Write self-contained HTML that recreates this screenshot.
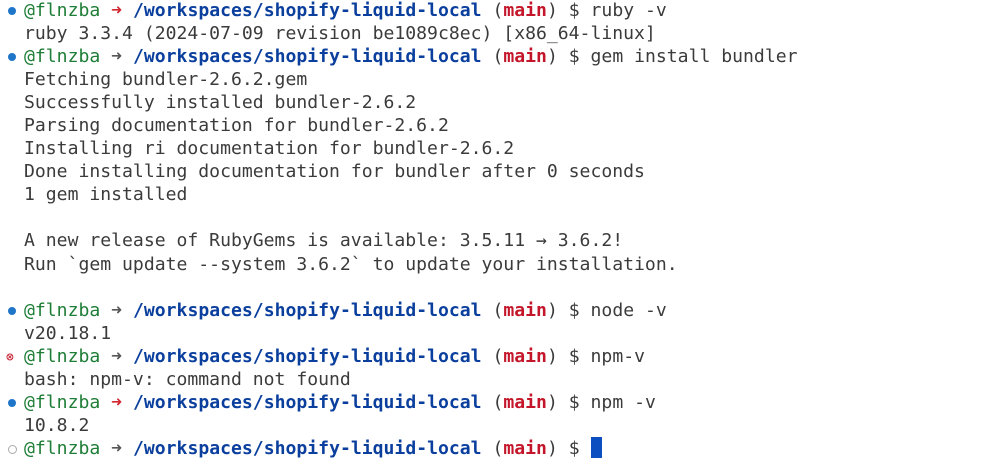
<!DOCTYPE html>
<html><head><meta charset="utf-8"><style>
body{margin:0;background:#fff;width:1002px;height:475px;overflow:hidden}
.t{position:absolute;left:0;top:-1px;font-family:"DejaVu Sans Mono","Liberation Mono",monospace;font-size:18.1px;line-height:23.05px;color:#3b3b3b}
.l{position:relative;padding-left:24px;height:23.05px;white-space:pre}
.g{color:#1e7d36}.b{color:#0b3f9e;font-weight:bold}.r{color:#c4162a;font-weight:bold}
.ar{color:#d0262e}.ag{color:#555}
.d{position:absolute;left:8px;top:8px;width:8px;height:8px;border-radius:50%;background:#1f75c8}
.o{position:absolute;left:8px;top:8px;width:7px;height:7px;border-radius:50%;border:1px solid #aaa}
.x{position:absolute;left:6px;top:1px;font-size:13px;color:#c4162a}
.cur{display:inline-block;width:11px;height:21px;background:#0b4fc0;vertical-align:-4px}
</style></head><body><div class="t"><div class="l"><span class="d"></span><span class="g">@flnzba</span> <span class="ar">➜</span> <span class="b">/workspaces/shopify-liquid-local</span> (<span class="r">main</span>) $ ruby -v</div><div class="l">ruby 3.3.4 (2024-07-09 revision be1089c8ec) [x86_64-linux]</div><div class="l"><span class="d"></span><span class="g">@flnzba</span> <span class="ag">➜</span> <span class="b">/workspaces/shopify-liquid-local</span> (<span class="r">main</span>) $ gem install bundler</div><div class="l">Fetching bundler-2.6.2.gem</div><div class="l">Successfully installed bundler-2.6.2</div><div class="l">Parsing documentation for bundler-2.6.2</div><div class="l">Installing ri documentation for bundler-2.6.2</div><div class="l">Done installing documentation for bundler after 0 seconds</div><div class="l">1 gem installed</div><div class="l"></div><div class="l">A new release of RubyGems is available: 3.5.11 → 3.6.2!</div><div class="l">Run `gem update --system 3.6.2` to update your installation.</div><div class="l"></div><div class="l"><span class="d"></span><span class="g">@flnzba</span> <span class="ag">➜</span> <span class="b">/workspaces/shopify-liquid-local</span> (<span class="r">main</span>) $ node -v</div><div class="l">v20.18.1</div><div class="l"><span class="x">⊗</span><span class="g">@flnzba</span> <span class="ag">➜</span> <span class="b">/workspaces/shopify-liquid-local</span> (<span class="r">main</span>) $ npm-v</div><div class="l">bash: npm-v: command not found</div><div class="l"><span class="d"></span><span class="g">@flnzba</span> <span class="ar">➜</span> <span class="b">/workspaces/shopify-liquid-local</span> (<span class="r">main</span>) $ npm -v</div><div class="l">10.8.2</div><div class="l"><span class="o"></span><span class="g">@flnzba</span> <span class="ag">➜</span> <span class="b">/workspaces/shopify-liquid-local</span> (<span class="r">main</span>) $ <span class="cur"></span></div></div></body></html>
